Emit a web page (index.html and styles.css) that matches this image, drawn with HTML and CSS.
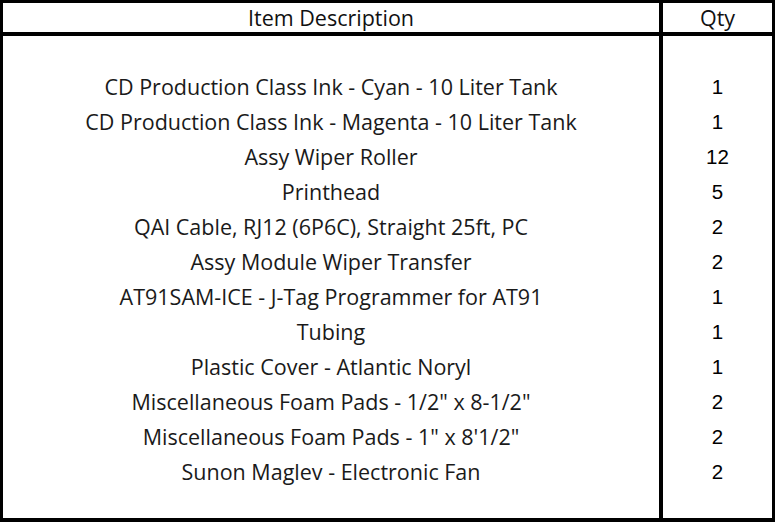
FILE: index.html
```html
<!DOCTYPE html>
<html>
<head>
<meta charset="utf-8">
<link rel="stylesheet" href="styles.css">
</head>
<body>
<div class="sheet">
  <div class="cell head desc">Item Description</div>
  <div class="cell head qty-h">Qty</div>
  <div class="cell col desc">
    <div class="row spacer"></div>
    <div class="row">CD Production Class Ink - Cyan - 10 Liter Tank</div>
    <div class="row">CD Production Class Ink - Magenta - 10 Liter Tank</div>
    <div class="row">Assy Wiper Roller</div>
    <div class="row">Printhead</div>
    <div class="row">QAI Cable, RJ12 (6P6C), Straight 25ft, PC</div>
    <div class="row">Assy Module Wiper Transfer</div>
    <div class="row">AT91SAM-ICE - J-Tag Programmer for AT91</div>
    <div class="row">Tubing</div>
    <div class="row">Plastic Cover - Atlantic Noryl</div>
    <div class="row">Miscellaneous Foam Pads - 1/2" x 8-1/2"</div>
    <div class="row">Miscellaneous Foam Pads - 1" x 8'1/2"</div>
    <div class="row">Sunon Maglev - Electronic Fan</div>
  </div>
  <div class="cell col qty">
    <div class="row spacer"></div>
    <div class="row">1</div>
    <div class="row">1</div>
    <div class="row">12</div>
    <div class="row">5</div>
    <div class="row">2</div>
    <div class="row">2</div>
    <div class="row">1</div>
    <div class="row">1</div>
    <div class="row">1</div>
    <div class="row">2</div>
    <div class="row">2</div>
    <div class="row">2</div>
  </div>
</div>
</body>
</html>
```
FILE: styles.css
```css
html, body {
  margin: 0;
  padding: 0;
  background: #fff;
}
.sheet {
  width: 775px;
  height: 522px;
  box-sizing: border-box;
  border: 3px solid #000;
  border-bottom-width: 4px;
  display: grid;
  grid-template-columns: 660px 109px;
  grid-template-rows: 33px 1fr;
  font-family: "Open Sans", "Liberation Sans", sans-serif;
  color: #1a1a1a;
}
.cell {
  text-align: center;
}
.desc {
  border-right: 4px solid #000;
}
.head {
  border-bottom: 4px solid #000;
  font-size: 21.5px;
  line-height: 29px;
  color: #111;
}
.col {
  font-size: 21.5px;
}
.row {
  height: 35px;
  line-height: 34px;
  white-space: nowrap;
}
.row.spacer {
  height: 34px;
}
.qty {
  font-family: "Liberation Sans", Arial, sans-serif;
  font-size: 20.5px;
  color: #000;
}
```
